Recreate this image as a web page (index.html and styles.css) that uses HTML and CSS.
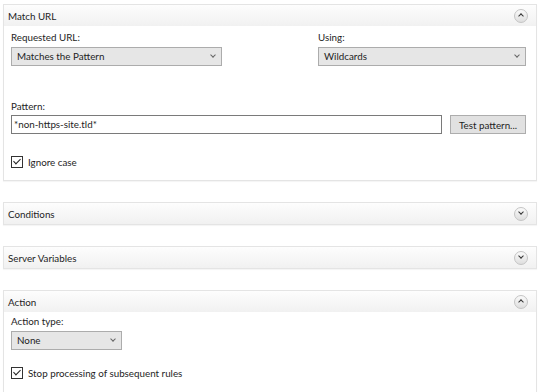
FILE: index.html
```html
<!DOCTYPE html>
<html lang="en">

<head>
  <meta charset="UTF-8">
  <title>Edit Rule</title>
  <link rel="stylesheet" href="styles.css">
</head>

<body>
  <div class="rule">
    <section class="panel">
      <header class="panel-head">
        <span>Match URL</span>
        <span class="toggle up"></span>
      </header>
      <div class="panel-body match">
        <div class="cols">
          <div class="field">
            <label>Requested URL:</label>
            <div class="select wide">Matches the Pattern</div>
          </div>
          <div class="field">
            <label>Using:</label>
            <div class="select">Wildcards</div>
          </div>
        </div>
        <div class="field pattern">
          <label>Pattern:</label>
          <div class="pattern-row">
            <div class="input">*non-https-site.tld*</div>
            <button type="button" class="btn">Test pattern...</button>
          </div>
        </div>
        <div class="check"><span class="box"></span>Ignore case</div>
      </div>
    </section>

    <section class="panel closed">
      <header class="panel-head">
        <span>Conditions</span>
        <span class="toggle down"></span>
      </header>
    </section>

    <section class="panel closed">
      <header class="panel-head">
        <span>Server Variables</span>
        <span class="toggle down"></span>
      </header>
    </section>

    <section class="panel">
      <header class="panel-head">
        <span>Action</span>
        <span class="toggle up"></span>
      </header>
      <div class="panel-body action">
        <div class="field">
          <label>Action type:</label>
          <div class="select small">None</div>
        </div>
        <div class="check"><span class="box"></span>Stop processing of subsequent rules</div>
      </div>
    </section>
  </div>
</body>

</html>
```

FILE: styles.css
```css
body {
  margin: 0;
  background: #fff;
  font-family: Lato, "Noto Sans", sans-serif;
  font-size: 9.8px;
  color: #1e1e1e;
}

.rule {
  padding: 4px 3px 0 3px;
  display: flex;
  flex-direction: column;
  gap: 21px;
}

.panel {
  border: 1px solid #e4e4e4;
  box-shadow: 0 1px 1px rgba(0, 0, 0, 0.04);
  background: #fff;
}

.panel-head {
  height: 21px;
  display: flex;
  align-items: center;
  justify-content: space-between;
  padding: 0 8px 0 4px;
  background: linear-gradient(#fdfdfd, #f1f1f1);
}

.toggle {
  width: 12px;
  height: 12px;
  border-radius: 50%;
  border: 1px solid #c4c4c4;
  background: linear-gradient(#fafafa, #dedede);
  position: relative;
}

.toggle::after {
  content: "";
  position: absolute;
  left: 4px;
  width: 3px;
  height: 3px;
  border-left: 1.5px solid #333;
  border-top: 1.5px solid #333;
}

.toggle.up::after {
  top: 4.5px;
  transform: rotate(45deg);
}

.toggle.down::after {
  top: 2.5px;
  transform: rotate(225deg);
}

.panel-body {
  padding: 4px 10px 0 7px;
}

.match {
  height: 150px;
}

.action {
  height: 90px;
}

.cols {
  display: grid;
  grid-template-columns: 307px 1fr;
}

.field label {
  display: block;
  line-height: 14px;
  margin-bottom: 3px;
}

.select {
  height: 17px;
  line-height: 17px;
  border: 1px solid #acacac;
  background: #e6e6e6;
  padding: 0 5px;
  position: relative;
}

.select::after {
  content: "";
  position: absolute;
  right: 6px;
  top: 5px;
  width: 3px;
  height: 3px;
  border-right: 1px solid #666;
  border-bottom: 1px solid #666;
  transform: rotate(45deg);
}

.select.wide {
  width: 199px;
}

.select.small {
  width: 99px;
}

.pattern {
  margin-top: 33px;
}

.pattern .label,
.pattern label {
  margin-bottom: 2px;
}

.pattern-row {
  display: flex;
  gap: 8px;
  align-items: center;
}

.input {
  flex: 1;
  height: 17px;
  line-height: 17px;
  border: 1px solid #7a7a7a;
  padding: 0 2px;
}

.btn {
  width: 76px;
  height: 19px;
  border: 1px solid #adadad;
  background: #e1e1e1;
  font: inherit;
  color: inherit;
  padding: 0;
}

.check {
  display: flex;
  align-items: center;
  gap: 5px;
  margin-top: 22px;
}

.box {
  width: 10px;
  height: 10px;
  border: 1px solid #333;
  position: relative;
}

.box::after {
  content: "";
  position: absolute;
  left: 3px;
  top: 0;
  width: 3px;
  height: 6px;
  border-right: 1px solid #222;
  border-bottom: 1px solid #222;
  transform: rotate(45deg);
}

.action {
  padding-top: 2px;
}

.action .check {
  margin-top: 17px;
}
```
